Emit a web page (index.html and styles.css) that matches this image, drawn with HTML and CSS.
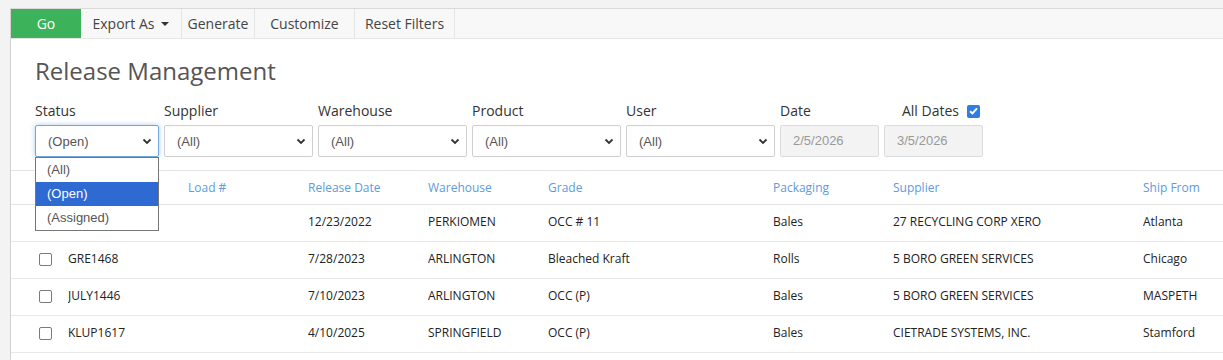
FILE: index.html
```html
<!DOCTYPE html>
<html lang="en">
<head>
  <meta charset="UTF-8">
  <title>Release Management</title>
  <link rel="stylesheet" href="styles.css">
</head>
<body>
  <div class="page">
    <!-- toolbar -->
    <div class="toolbar">
      <button class="tb-btn go">Go</button>
      <button class="tb-btn export">Export As <span class="caret"></span></button>
      <button class="tb-btn generate">Generate</button>
      <button class="tb-btn customize">Customize</button>
      <button class="tb-btn reset">Reset Filters</button>
    </div>

    <div class="content">
      <h1 class="title">Release Management</h1>

      <!-- filters -->
      <div class="filters">
        <div class="filter status">
          <label>Status</label>
          <div class="select focused">
            <span>(Open)</span>
            <svg class="chev" width="10" height="7" viewBox="0 0 10 7"><path d="M1.5 1.5 L5 5 L8.5 1.5" fill="none" stroke="#333" stroke-width="1.8"/></svg>
          </div>
          <ul class="dropdown">
            <li>(All)</li>
            <li class="active">(Open)</li>
            <li>(Assigned)</li>
          </ul>
        </div>
        <div class="filter">
          <label>Supplier</label>
          <div class="select">
            <span>(All)</span>
            <svg class="chev" width="10" height="7" viewBox="0 0 10 7"><path d="M1.5 1.5 L5 5 L8.5 1.5" fill="none" stroke="#333" stroke-width="1.8"/></svg>
          </div>
        </div>
        <div class="filter">
          <label>Warehouse</label>
          <div class="select">
            <span>(All)</span>
            <svg class="chev" width="10" height="7" viewBox="0 0 10 7"><path d="M1.5 1.5 L5 5 L8.5 1.5" fill="none" stroke="#333" stroke-width="1.8"/></svg>
          </div>
        </div>
        <div class="filter">
          <label>Product</label>
          <div class="select">
            <span>(All)</span>
            <svg class="chev" width="10" height="7" viewBox="0 0 10 7"><path d="M1.5 1.5 L5 5 L8.5 1.5" fill="none" stroke="#333" stroke-width="1.8"/></svg>
          </div>
        </div>
        <div class="filter">
          <label>User</label>
          <div class="select">
            <span>(All)</span>
            <svg class="chev" width="10" height="7" viewBox="0 0 10 7"><path d="M1.5 1.5 L5 5 L8.5 1.5" fill="none" stroke="#333" stroke-width="1.8"/></svg>
          </div>
        </div>
        <div class="filter dates">
          <div class="date-labels">
            <label>Date</label>
            <label class="all-dates">All Dates
              <span class="check">
                <svg width="9" height="8" viewBox="0 0 9 8"><path d="M1 4.2 L3.4 6.4 L8 1.3" fill="none" stroke="#fff" stroke-width="2"/></svg>
              </span>
            </label>
          </div>
          <div class="date-inputs">
            <div class="date">2/5/2026</div>
            <div class="date">3/5/2026</div>
          </div>
        </div>
      </div>
    </div>

    <!-- results -->
    <table class="grid">
      <colgroup>
        <col style="width:57px">
        <col style="width:120px">
        <col style="width:120px">
        <col style="width:120px">
        <col style="width:120px">
        <col style="width:225px">
        <col style="width:120px">
        <col style="width:250px">
        <col>
      </colgroup>
      <thead>
        <tr>
          <th></th>
          <th></th>
          <th>Load #</th>
          <th>Release Date</th>
          <th>Warehouse</th>
          <th>Grade</th>
          <th>Packaging</th>
          <th>Supplier</th>
          <th>Ship From</th>
        </tr>
      </thead>
      <tbody>
        <tr>
          <td><span class="cb"></span></td>
          <td></td>
          <td></td>
          <td>12/23/2022</td>
          <td>PERKIOMEN</td>
          <td>OCC # 11</td>
          <td>Bales</td>
          <td>27 RECYCLING CORP XERO</td>
          <td>Atlanta</td>
        </tr>
        <tr>
          <td><span class="cb"></span></td>
          <td>GRE1468</td>
          <td></td>
          <td>7/28/2023</td>
          <td>ARLINGTON</td>
          <td>Bleached Kraft</td>
          <td>Rolls</td>
          <td>5 BORO GREEN SERVICES</td>
          <td>Chicago</td>
        </tr>
        <tr>
          <td><span class="cb"></span></td>
          <td>JULY1446</td>
          <td></td>
          <td>7/10/2023</td>
          <td>ARLINGTON</td>
          <td>OCC (P)</td>
          <td>Bales</td>
          <td>5 BORO GREEN SERVICES</td>
          <td>MASPETH</td>
        </tr>
        <tr>
          <td><span class="cb"></span></td>
          <td>KLUP1617</td>
          <td></td>
          <td>4/10/2025</td>
          <td>SPRINGFIELD</td>
          <td>OCC (P)</td>
          <td>Bales</td>
          <td>CIETRADE SYSTEMS, INC.</td>
          <td>Stamford</td>
        </tr>
      </tbody>
    </table>
  </div>
</body>
</html>
```

FILE: styles.css
```css
/* page frame */
body {
  margin: 0;
  background: #f3f3f3;
  font-family: 'Open Sans', 'Liberation Sans', sans-serif;
  color: #333;
}

.page {
  margin: 8px 0 0 10px;
  border-top: 1px solid #dadada;
  border-left: 1px solid #d2d2d2;
  background: #fff;
  height: 351px;
}

/* toolbar */
.toolbar {
  display: flex;
  height: 29px;
  background: #f8f8f8;
  border-bottom: 1px solid #e6e6e6;
}

.tb-btn {
  height: 29px;
  padding: 0;
  border: none;
  border-right: 1px solid #e6e6e6;
  background: transparent;
  font-family: 'Open Sans', sans-serif;
  font-size: 14px;
  color: #444;
  display: flex;
  align-items: center;
  justify-content: center;
}

.tb-btn.go {
  width: 70px;
  background: #3cb25a;
  color: #fff;
  border-right: none;
}

.tb-btn.export { width: 101px; }
.tb-btn.generate { width: 73px; }
.tb-btn.customize { width: 100px; }
.tb-btn.reset { width: 100px; }

.caret {
  display: inline-block;
  margin-left: 7px;
  border-left: 4px solid transparent;
  border-right: 4px solid transparent;
  border-top: 4px solid #333;
}

/* title and filters */
.content {
  padding: 16px 24px 0;
}

.title {
  margin: 0;
  font-size: 24px;
  line-height: 32px;
  font-weight: 400;
  color: #555;
}

.filters {
  display: flex;
  gap: 5px;
  margin-top: 14px;
}

.filter {
  position: relative;
  display: flex;
  flex-direction: column;
  gap: 4px;
  width: 149px;
}

.filter.status { width: 124px; }
.filter.dates { width: 203px; }

.filter label {
  font-size: 14px;
  line-height: 20px;
  color: #333;
}

.select {
  box-sizing: border-box;
  height: 32px;
  border: 1px solid #cfcfcf;
  border-radius: 2px;
  display: flex;
  align-items: center;
  justify-content: space-between;
  padding: 0 6px 0 12px;
  font-family: 'Liberation Sans', Arial, sans-serif;
  font-size: 13px;
  color: #555;
}

.select.focused {
  border-color: #6ea6dd;
  box-shadow: 0 0 5px rgba(102, 160, 225, 0.55);
}

.dropdown {
  position: absolute;
  top: 56px;
  left: 0;
  width: 124px;
  box-sizing: border-box;
  margin: 0;
  padding: 0;
  list-style: none;
  background: #fff;
  border: 1px solid #767676;
  font-family: 'Liberation Sans', Arial, sans-serif;
  font-size: 13px;
  color: #555;
  z-index: 2;
}

.dropdown li {
  height: 24px;
  line-height: 24px;
  padding-left: 11px;
}

.dropdown li.active {
  background: #2f69d2;
  color: #fff;
}

.date-labels {
  display: flex;
  justify-content: space-between;
  align-items: center;
}

.all-dates {
  display: flex;
  align-items: center;
  gap: 8px;
  margin-right: 3px;
}

.check {
  width: 13px;
  height: 13px;
  border-radius: 2px;
  background: #2f7ce2;
  display: flex;
  align-items: center;
  justify-content: center;
}

.date-inputs {
  display: flex;
  gap: 5px;
}

.date {
  box-sizing: border-box;
  width: 99px;
  height: 32px;
  border: 1px solid #dcdcdc;
  border-radius: 2px;
  background: #f3f3f3;
  padding-left: 12px;
  line-height: 30px;
  font-family: 'Liberation Sans', Arial, sans-serif;
  font-size: 13px;
  color: #999;
}

/* results table */
.grid {
  width: 100%;
  margin-top: 13px;
  border-collapse: collapse;
  table-layout: fixed;
  font-size: 12px;
}

.grid th,
.grid td {
  padding: 0;
  text-align: left;
  white-space: nowrap;
  overflow: hidden;
}

.grid th {
  height: 33px;
  font-weight: 400;
  color: #5d9bdb;
  border-top: 1px solid #e4e4e4;
  border-bottom: 1px solid #e4e4e4;
}

.grid td {
  height: 33px;
  padding-bottom: 3px;
  color: #222;
  border-bottom: 1px solid #e8e8e8;
}

.grid td:first-child {
  padding-left: 28px;
}

.cb {
  display: block;
  width: 11px;
  height: 11px;
  margin-top: 2px;
  border: 1px solid #7a7a7a;
  border-radius: 2px;
  background: #fff;
}
```
